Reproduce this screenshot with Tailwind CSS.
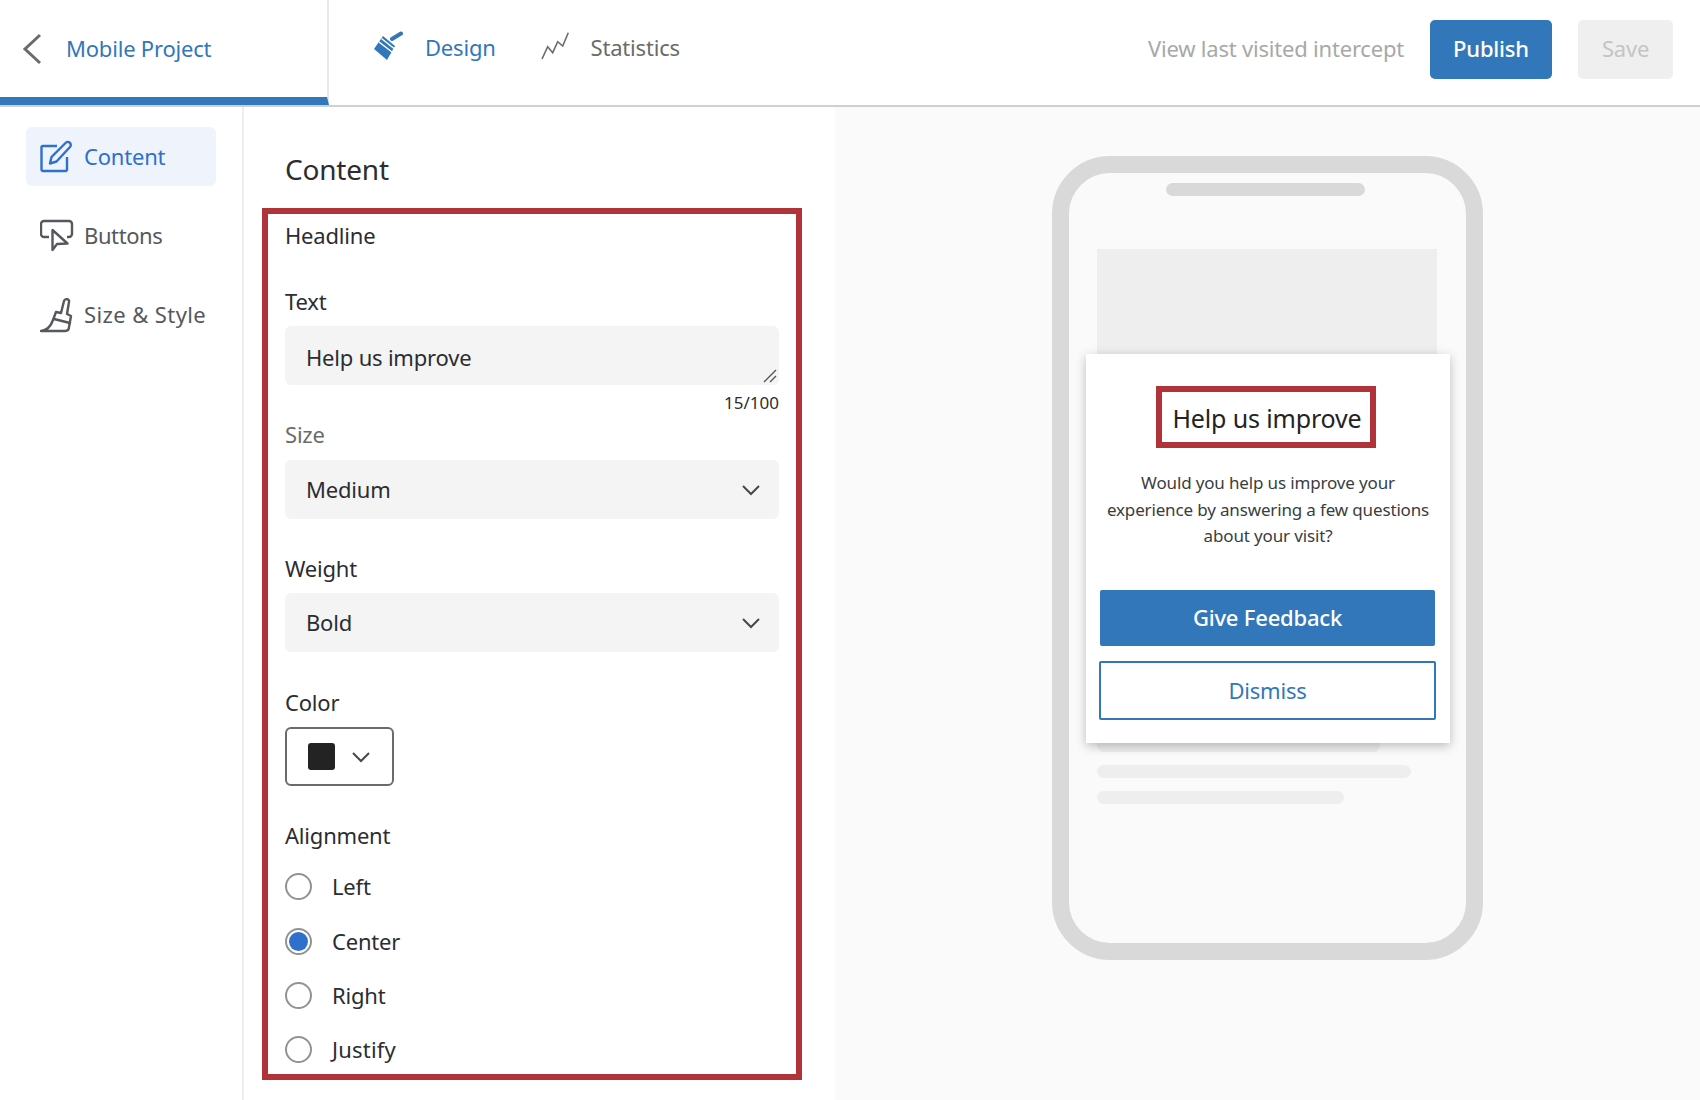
<!DOCTYPE html>
<html lang="en">
<head>
  <meta charset="UTF-8" />
  <title>Mobile Project</title>
  <script src="https://cdn.jsdelivr.net/npm/@tailwindcss/browser@4"></script>
</head>
<body class="h-[1100px] overflow-hidden bg-white font-['Noto_Sans',sans-serif] text-[22px] tracking-[-0.2px] text-[#2b2d31]">

  <!-- top bar -->
  <header class="flex h-[107px] border-b-2 border-[#d0d0d0]">
    <div class="flex w-[329px] items-start border-r-2 border-[#e8e8e8] border-b-[8px] border-b-[#3277b9] pl-[22px] pt-[33px]">
      <svg class="h-[32px] w-[20px]" viewBox="0 0 20 32" fill="none" stroke="#6b6b6b" stroke-width="3"><path d="M18 2 L3 16 L18 30" /></svg>
      <span class="-mt-[1px] ml-[24px] leading-[32px] text-[#3277b9]">Mobile Project</span>
    </div>
    <nav class="flex items-start pl-[45px] pt-[31px]">
      <svg class="h-[30px] w-[30px]" viewBox="0 0 30 30">
        <path d="M0 18 L9 5 L21 15 L13 29 Z" fill="#3277b9" />
        <path d="M18 8 L27 2.5" stroke="#3277b9" stroke-width="4" stroke-linecap="round" />
        <path d="M5 11 L18 21 M7.5 7.5 L20 17.5" stroke="#fff" stroke-width="1.5" />
      </svg>
      <span class="-mt-[1px] ml-[21px] leading-[34px] text-[#3277b9]">Design</span>
      <svg class="ml-[45px] h-[30px] w-[30px]" viewBox="0 0 30 30" fill="none" stroke="#6b6b6b" stroke-width="1.6"><polyline points="1,28 6.7,15.7 11.7,21.7 16.7,10.7 21.7,15 27.3,1.7" /></svg>
      <span class="-mt-[1px] ml-[20px] leading-[34px] text-[#6b6b6b]">Statistics</span>
    </nav>
    <div class="ml-auto flex items-start pr-[27px] pt-[20px]">
      <span class="mt-[12px] leading-[32px] text-[#a8a8a8]">View last visited intercept</span>
      <button class="ml-[26px] h-[59px] w-[122px] rounded-[5px] bg-[#3277b9] pb-[2px] font-medium text-white">Publish</button>
      <button class="ml-[26px] h-[59px] w-[95px] rounded-[5px] bg-[#efefef] pb-[2px] text-[#c4c4c4]">Save</button>
    </div>
  </header>

  <div class="flex h-[993px]">
    <!-- left menu -->
    <aside class="w-[244px] shrink-0 border-r-2 border-[#eeeeee] pl-[26px] pt-[20px]">
      <div class="flex h-[59px] w-[190px] items-center rounded-[6px] bg-[#eef3fc] pl-[14px] text-[#2f6fce]">
        <svg class="h-[34px] w-[34px]" viewBox="0 0 34 34" fill="none" stroke="currentColor" stroke-width="2.4" stroke-linejoin="round"><path d="M17 6 H3 a1.5 1.5 0 0 0 -1.5 1.5 V29.5 a1.5 1.5 0 0 0 1.5 1.5 H25.5 a1.5 1.5 0 0 0 1.5 -1.5 V17" /><path d="M10 23.5 L11.5 17 L25.5 3 a2.8 2.8 0 0 1 4.5 4 L16.5 21.5 Z" /></svg>
        <span class="ml-[10px]">Content</span>
      </div>
      <div class="mt-[20px] flex h-[59px] items-center pl-[14px] text-[#55585c]">
        <svg class="h-[34px] w-[34px]" viewBox="0 0 34 34" fill="none" stroke="currentColor" stroke-width="2.4" stroke-linejoin="round"><path d="M9 18 H4 a3 3 0 0 1 -3 -3 V5 a3 3 0 0 1 3 -3 H29 a3 3 0 0 1 3 3 V15 a3 3 0 0 1 -3 3 H27" /><path d="M12.5 11 L12.5 31 L17 25 L27.5 24.5 Z" /></svg>
        <span class="ml-[10px] tracking-[-0.4px]">Buttons</span>
      </div>
      <div class="mt-[20px] flex h-[59px] items-center pl-[14px] text-[#55585c]">
        <svg class="h-[36px] w-[34px]" viewBox="0 0 34 36" fill="none" stroke="currentColor" stroke-width="2.4" stroke-linejoin="round" stroke-linecap="round"><path d="M1 34 C8 33 11 29 13 23 L16 15 L21 16 L24 4 C25 1 30 2 29 5 L27 17 L31 19 L29 30 C29 33 27 34 25 34 Z" /><path d="M14 22 L30 26" /></svg>
        <span class="ml-[10px] tracking-[0.4px]">Size &amp; Style</span>
      </div>
    </aside>

    <!-- content form -->
    <main class="w-[591px] shrink-0 pl-[18px] pt-[42px]">
      <h1 class="mb-[19px] pl-[23px] text-[28px] leading-[40px]">Content</h1>
      <section class="h-[872px] w-[540px] border-[6px] border-[#b1333a] pl-[17px] pr-[17px]">
        <p class="pt-[5px] leading-[32px]">Headline</p>

        <p class="mt-[34px] leading-[32px]">Text</p>
        <div class="relative mt-[9px] flex h-[59px] items-center rounded-[6px] bg-[#f4f4f4] pl-[21px] pt-[3px]">
          Help us improve
          <svg class="absolute bottom-[2px] right-[2px] h-[14px] w-[14px]" viewBox="0 0 14 14" stroke="#555" stroke-width="1.4"><path d="M1 13 L13 1 M7 13 L13 7" /></svg>
        </div>
        <p class="mt-[6px] text-right text-[17px] leading-[24px] tracking-normal">15/100</p>

        <p class="mt-[3px] leading-[32px] text-[#6b6b6b]">Size</p>
        <div class="mt-[10px] flex h-[59px] items-center justify-between rounded-[6px] bg-[#f4f4f4] pl-[21px] pr-[19px]">
          Medium
          <svg class="h-[12px] w-[18px]" viewBox="0 0 18 12" fill="none" stroke="#45484c" stroke-width="2"><path d="M1 2 L9 10 L17 2" /></svg>
        </div>

        <p class="mt-[33px] leading-[32px]">Weight</p>
        <div class="mt-[9px] flex h-[59px] items-center justify-between rounded-[6px] bg-[#f4f4f4] pl-[21px] pr-[19px]">
          Bold
          <svg class="h-[12px] w-[18px]" viewBox="0 0 18 12" fill="none" stroke="#45484c" stroke-width="2"><path d="M1 2 L9 10 L17 2" /></svg>
        </div>

        <p class="mt-[34px] leading-[32px]">Color</p>
        <div class="mt-[9px] flex h-[59px] w-[109px] items-center rounded-[6px] border-2 border-[#6b6b6b] pl-[21px]">
          <span class="h-[27px] w-[27px] rounded-[3px] bg-[#232323]"></span>
          <svg class="ml-[17px] h-[12px] w-[18px]" viewBox="0 0 18 12" fill="none" stroke="#45484c" stroke-width="2"><path d="M1 2 L9 10 L17 2" /></svg>
        </div>

        <p class="mt-[33px] leading-[32px]">Alignment</p>
        <div class="mt-[8px] flex h-[55px] items-center gap-[20px]">
          <span class="h-[27px] w-[27px] rounded-full border-2 border-[#8f9396]"></span>Left
        </div>
        <div class="flex h-[54px] items-center gap-[20px]">
          <span class="flex h-[27px] w-[27px] items-center justify-center rounded-full border-2 border-[#8f9396]"><span class="h-[19px] w-[19px] rounded-full bg-[#2f6fce]"></span></span>Center
        </div>
        <div class="flex h-[54px] items-center gap-[20px]">
          <span class="h-[27px] w-[27px] rounded-full border-2 border-[#8f9396]"></span>Right
        </div>
        <div class="flex h-[54px] items-center gap-[20px]">
          <span class="h-[27px] w-[27px] rounded-full border-2 border-[#8f9396]"></span><span class="tracking-[0.2px]">Justify</span>
        </div>
      </section>
    </main>

    <!-- phone preview -->
    <div class="flex flex-1 justify-center bg-[#fafafa] pt-[49px]">
      <div class="relative h-[804px] w-[431px] rounded-[58px] border-[17px] border-[#d9d9d9]">
        <div class="ml-[97px] mt-[10px] h-[13px] w-[199px] rounded-full bg-[#d9d9d9]"></div>
        <div class="ml-[28px] mt-[53px] h-[106px] w-[340px] bg-[#eeeeee]"></div>
        <div class="ml-[28px] mt-[384px] h-[13px] w-[283px] rounded-full bg-[#eeeeee]"></div>
        <div class="ml-[28px] mt-[13px] h-[13px] w-[314px] rounded-full bg-[#eeeeee]"></div>
        <div class="ml-[28px] mt-[13px] h-[13px] w-[247px] rounded-full bg-[#eeeeee]"></div>

        <!-- intercept over the page placeholder -->
        <div class="absolute left-[17px] top-[181px] h-[389px] w-[364px] bg-white shadow-[0_3px_10px_rgba(0,0,0,0.25)]">
          <div class="ml-[70px] mt-[32px] flex h-[62px] w-[220px] items-center justify-center whitespace-nowrap border-[6px] border-[#b1333a] pl-[2px] pt-[3px] text-[25px] tracking-[-0.15px] text-[#232323]">Help us improve</div>
          <p class="mt-[22px] text-center text-[17px] leading-[26.5px] tracking-[-0.15px] text-[#3a3d40]">Would you help us improve your<br />experience by answering a few questions<br />about your visit?</p>
          <div class="ml-[14px] mt-[40px] flex h-[56px] w-[335px] items-center justify-center rounded-[2px] bg-[#3277b9] font-medium text-white">Give Feedback</div>
          <div class="ml-[13px] mt-[15px] flex h-[59px] w-[337px] items-center justify-center rounded-[2px] border-2 border-[#3277b9] text-[#3277b9]">Dismiss</div>
        </div>
      </div>
    </div>
  </div>

</body>
</html>
